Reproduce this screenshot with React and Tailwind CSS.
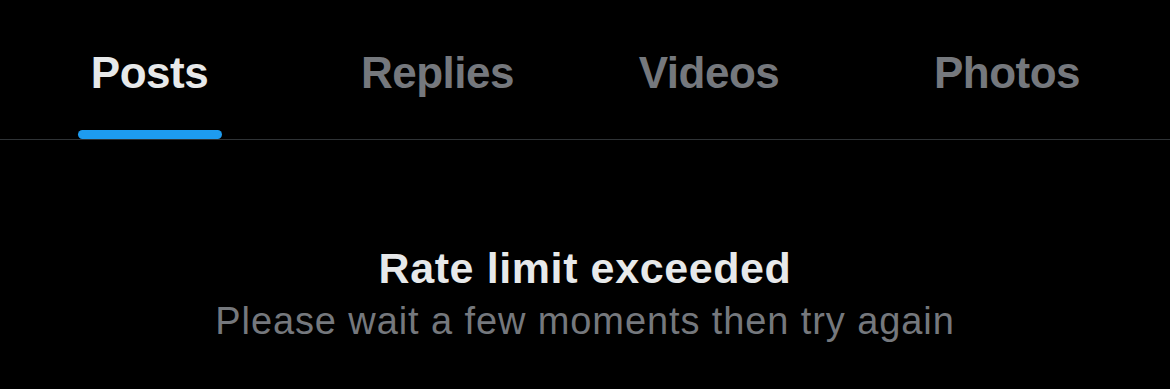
import React from 'react';

const tabs = [
  { label: 'Posts', width: 'w-[299px]', active: true },
  { label: 'Replies', width: 'w-[277px]' },
  { label: 'Videos', width: 'w-[266px]' },
  { label: 'Photos', width: 'w-[330px]' },
];

export default function App() {
  return (
    <div className="h-[389px] w-full overflow-hidden bg-black font-['Liberation_Sans',Arial,sans-serif]">
      {/* tab bar */}
      <div className="flex h-[140px] overflow-hidden border-b border-[#2f3336]">
        {tabs.map((tab) => (
          <div key={tab.label} className={`${tab.width} flex shrink-0 flex-col items-center`}>
            <span
              className={`pt-[51px] text-[44px] font-bold leading-none tracking-[-0.5px] ${
                tab.active ? 'text-[#e7e9ea]' : 'text-[#75787d]'
              }`}
            >
              {tab.label}
            </span>
            {tab.active && <div className="mt-auto h-[9px] w-[144px] rounded-full bg-[#1d9bf0]" />}
          </div>
        ))}
      </div>

      {/* empty state */}
      <div className="flex flex-col items-center pt-[107px]">
        <p className="text-[43px] font-bold leading-none tracking-[0.6px] text-[#e7e9ea]">Rate limit exceeded</p>
        <p className="mt-[12px] text-[38px] leading-none tracking-[0.9px] text-[#75787d]">
          Please wait a few moments then try again
        </p>
      </div>
    </div>
  );
}
